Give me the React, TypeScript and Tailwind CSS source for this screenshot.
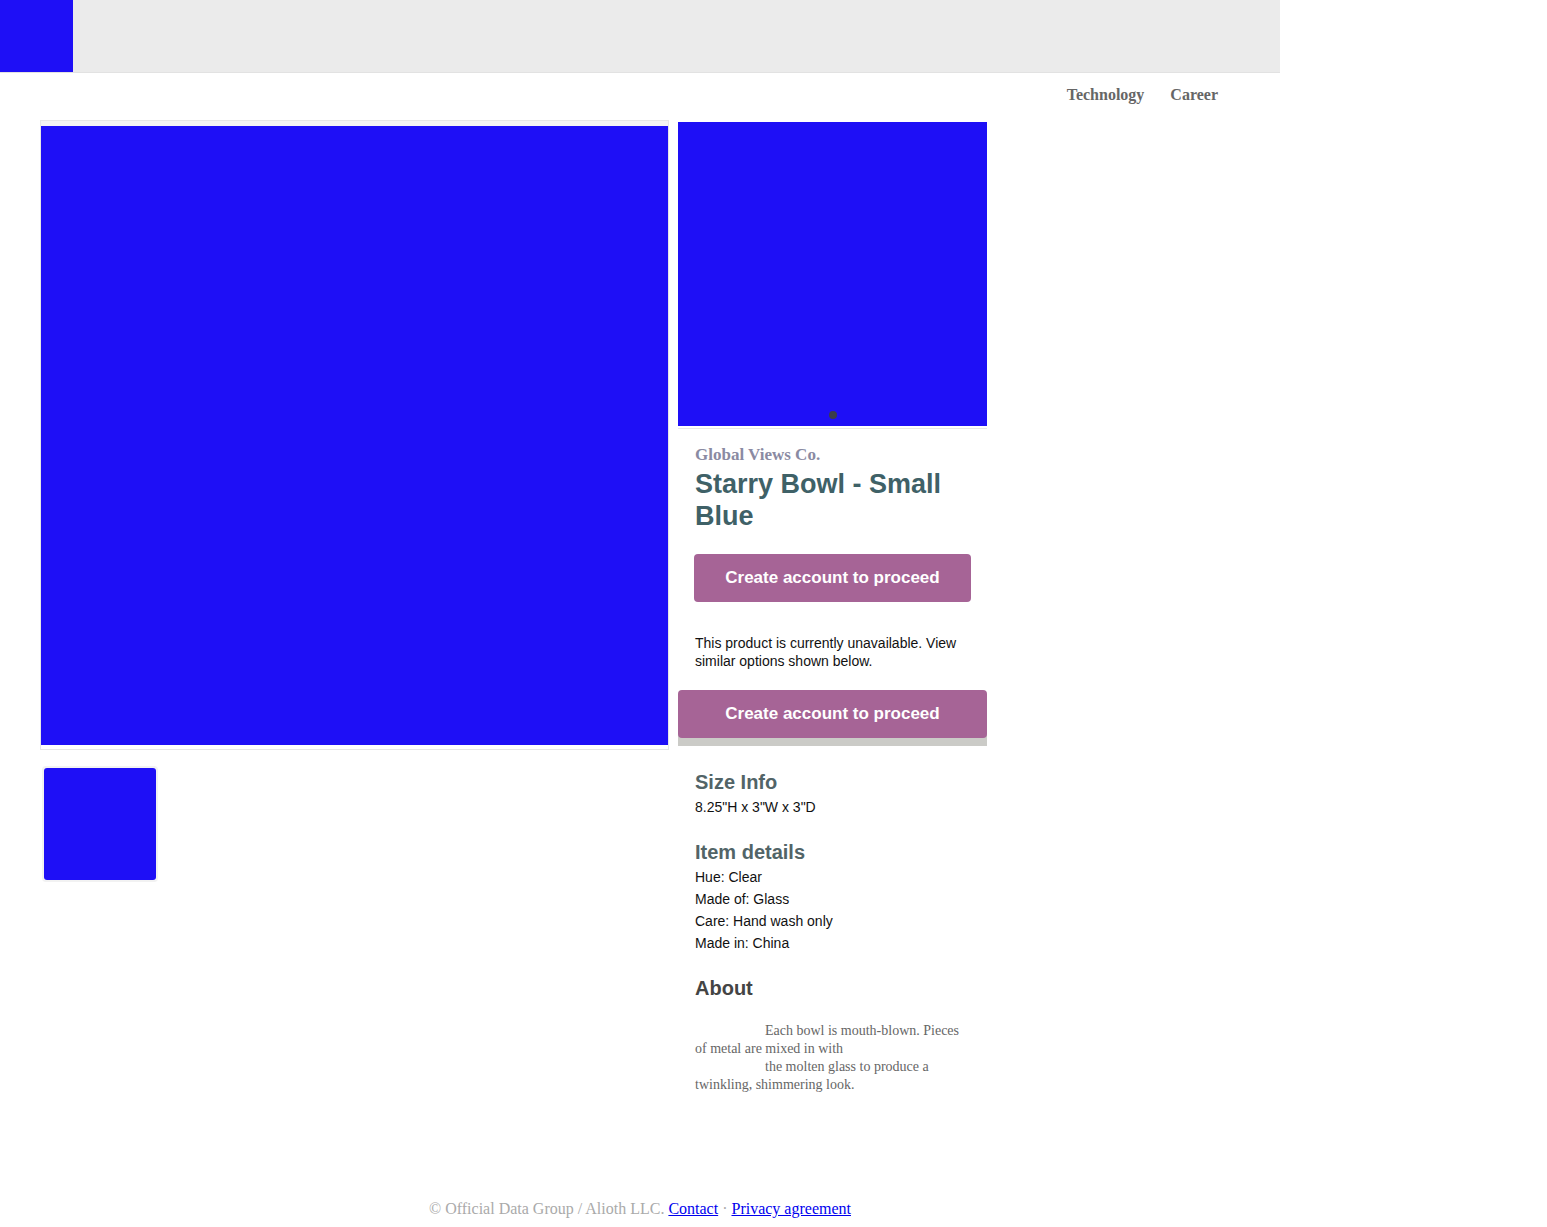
const blue = "bg-[#1e0ff6]";

function CtaButton({ wide }: { wide?: boolean }) {
  return (
    <button
      className={
        (wide ? "w-full" : "w-[277px]") +
        " h-[48px] rounded-[4px] bg-[#a66496] text-[17px] font-bold leading-[20px] text-white"
      }
    >
      Create account to proceed
    </button>
  );
}

export default function App() {
  return (
    <div className="min-h-[1227px] w-[1280px] bg-white font-['Liberation_Sans',Arial,sans-serif] text-[#111]">
      <header className="flex h-[73px] border-b border-[#e2e2e2] bg-[#ebebeb]">
        <div className={`h-[72px] w-[73px] ${blue}`} />
      </header>

      <nav className="flex h-[47px] items-start justify-end gap-[26px] pr-[62px] pt-[13px] font-['Liberation_Serif','Times_New_Roman',serif] text-[16px] font-bold leading-[18px] text-[#666]">
        <a>Technology</a>
        <a>Career</a>
      </nav>

      <main className="flex items-start gap-[9px] pl-[40px]">
        <div className="flex flex-col">
          <div className="w-[629px] border border-[#e6e6e6]">
            <div className="h-[5px] bg-[#f4f4f4]" />
            <div className={`h-[619px] ${blue}`} />
            <div className="h-[4px] bg-white" />
          </div>
          <div className="ml-[2px] mt-[16px] h-[116px] w-[116px] rounded-[4px] border-2 border-[#f2f2f2]">
            <div className={`h-full w-full rounded-[3px] ${blue}`} />
          </div>
        </div>

        <div className="mt-[2px] w-[309px]">
          <div className={`relative h-[304px] ${blue}`}>
            <span className="absolute bottom-[7px] left-[151px] h-[8px] w-[8px] rounded-full bg-[#3b3d4a]" />
          </div>
          <div className="mt-[2px] h-[1px] bg-[#e8e8e8]" />

          <div className="px-4 pt-[17px]">
            <div className="pl-[1px]">
              <p className="font-['Liberation_Serif','Times_New_Roman',serif] text-[17px] font-bold leading-[18px] text-[#8a8aa2]">
                Global Views Co.
              </p>
              <h1 className="mt-[4px] text-[27px] font-bold leading-[32px] text-[#3f6167]">
                Starry Bowl - Small Blue
              </h1>
            </div>
            <div className="mt-[22px]">
              <CtaButton />
            </div>
            <p className="mt-[32px] pl-[1px] text-[14px] leading-[18px] text-[#111]">
              This product is currently unavailable. View similar options shown below.
            </p>
          </div>

          <div className="mt-[20px] bg-[linear-gradient(to_bottom,transparent_24px,#cbcbc7_24px)] pb-[8px]">
            <CtaButton wide />
          </div>

          <div className="pl-[17px] pr-4">
            <h2 className="mt-[24px] text-[20px] font-bold leading-[24px] text-[#526467]">Size Info</h2>
            <p className="mt-[4px] text-[14px] leading-[18px]">8.25"H x 3"W x 3"D</p>

            <h2 className="mt-[24px] text-[20px] font-bold leading-[24px] text-[#526467]">Item details</h2>
            <ul className="mt-[2px] text-[14px] leading-[22px]">
              <li>Hue: Clear</li>
              <li>Made of: Glass</li>
              <li>Care: Hand wash only</li>
              <li>Made in: China</li>
            </ul>

            <h2 className="mt-[22px] text-[20px] font-bold leading-[24px] text-[#444]">About</h2>
            <div className="mt-[22px] font-['Liberation_Serif','Times_New_Roman',serif] text-[14px] leading-[18px] text-[#666]">
              <p className="indent-[70px]">
                Each bowl is mouth-blown. Pieces of metal are mixed in with
              </p>
              <p className="indent-[70px]">
                the molten glass to produce a twinkling, shimmering look.
              </p>
            </div>
          </div>
        </div>
      </main>

      <footer className="mt-[106px] pb-[10px] text-center font-['Liberation_Serif','Times_New_Roman',serif] text-[16px] leading-[18px] text-[#aaa]">
        © Official Data Group / Alioth LLC.{" "}
        <a href="#" className="text-[#0000ee] underline">
          Contact
        </a>{" "}
        ·{" "}
        <a href="#" className="text-[#0000ee] underline">
          Privacy agreement
        </a>
      </footer>
    </div>
  );
}
